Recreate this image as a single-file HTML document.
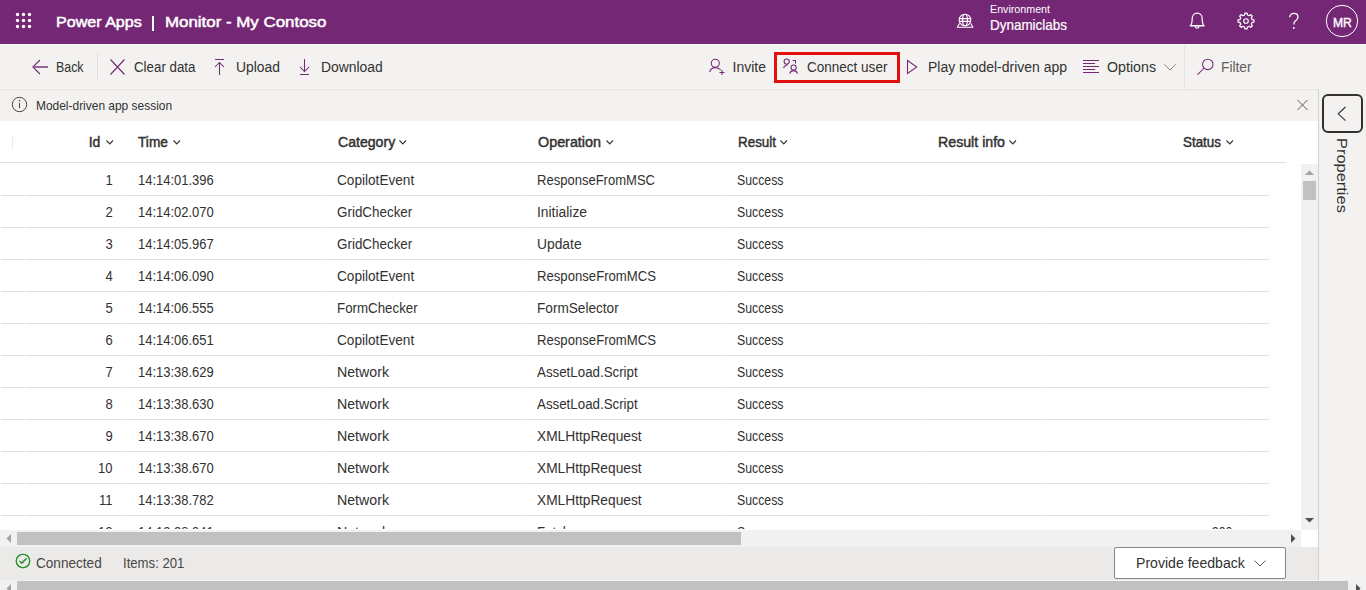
<!DOCTYPE html>
<html><head><meta charset="utf-8">
<style>
*{box-sizing:border-box;margin:0;padding:0}
html,body{width:1366px;height:590px;overflow:hidden;background:#fff;font-family:"Liberation Sans",sans-serif;color:#323130;position:relative}
.a{position:absolute;white-space:nowrap}
.r{position:absolute}
svg{position:absolute;overflow:visible}
</style></head><body>

<div class="r" style="left:0;top:0;width:1366px;height:44px;background:#742774"></div>
<div class="r" style="left:0;top:44px;width:1366px;height:1px;background:#f8f7f7"></div>
<svg style="left:16px;top:13px" width="15" height="15" viewBox="0 0 15 15"><g fill="#fff"><circle cx="1.5" cy="1.5" r="1.65"/><circle cx="7.5" cy="1.5" r="1.65"/><circle cx="13.5" cy="1.5" r="1.65"/><circle cx="1.5" cy="7.5" r="1.65"/><circle cx="7.5" cy="7.5" r="1.65"/><circle cx="13.5" cy="7.5" r="1.65"/><circle cx="1.5" cy="13.5" r="1.65"/><circle cx="7.5" cy="13.5" r="1.65"/><circle cx="13.5" cy="13.5" r="1.65"/></g></svg>
<div class="a" style="left:56.20px;top:14.20px;font-size:15px;line-height:15px;-webkit-text-stroke:0.5px #fff;color:#fff;transform:scaleX(1.0717);transform-origin:0 0;">Power Apps</div>
<div class="r" style="left:152.3px;top:16px;width:1.8px;height:15px;background:#fff"></div>
<div class="a" style="left:164.60px;top:14.20px;font-size:15px;line-height:15px;-webkit-text-stroke:0.5px #fff;color:#fff;transform:scaleX(1.1255);transform-origin:0 0;">Monitor - My Contoso</div>
<div class="a" style="left:990.00px;top:3.62px;font-size:10.5px;line-height:10.5px;color:#fff;transform:scaleX(1.0177);transform-origin:0 0;">Environment</div>
<div class="a" style="left:990.00px;top:16.90px;font-size:15px;line-height:15px;-webkit-text-stroke:0.2px #fff;color:#fff;transform:scaleX(0.8967);transform-origin:0 0;">Dynamiclabs</div>
<div class="r" style="left:0;top:45px;width:1366px;height:44px;background:#f3f2f1"></div>
<div class="r" style="left:0;top:89px;width:1318px;height:1px;background:#e9e8e7"></div>
<div class="r" style="left:0;top:90px;width:1318px;height:1px;background:#efeeed"></div>
<div class="r" style="left:0;top:91px;width:1318px;height:30px;background:#f3f2f1"></div>
<div class="a" style="left:56.40px;top:59.76px;font-size:14px;line-height:14px;transform:scaleX(0.8860);transform-origin:0 0;">Back</div>
<div class="r" style="left:97px;top:53px;width:1px;height:28px;background:#e1dfdd"></div>
<div class="a" style="left:133.80px;top:59.76px;font-size:14px;line-height:14px;transform:scaleX(0.9519);transform-origin:0 0;">Clear data</div>
<div class="a" style="left:236.30px;top:59.76px;font-size:14px;line-height:14px;transform:scaleX(0.9892);transform-origin:0 0;">Upload</div>
<div class="a" style="left:321.20px;top:59.76px;font-size:14px;line-height:14px;transform:scaleX(0.9925);transform-origin:0 0;">Download</div>
<div class="a" style="left:732.50px;top:59.76px;font-size:14px;line-height:14px;">Invite</div>
<div class="r" style="left:774px;top:52px;width:126px;height:31px;border:3px solid #e31010"></div>
<div class="a" style="left:806.60px;top:59.76px;font-size:14px;line-height:14px;transform:scaleX(0.9656);transform-origin:0 0;">Connect user</div>
<div class="a" style="left:928.00px;top:59.76px;font-size:14px;line-height:14px;transform:scaleX(0.9978);transform-origin:0 0;">Play model-driven app</div>
<div class="a" style="left:1107.00px;top:59.76px;font-size:14px;line-height:14px;transform:scaleX(1.0152);transform-origin:0 0;">Options</div>
<div class="r" style="left:1184px;top:45px;width:1px;height:44px;background:#e8e6e4"></div>
<div class="a" style="left:1221.00px;top:59.76px;font-size:14px;line-height:14px;color:#605e5c;transform:scaleX(0.9802);transform-origin:0 0;">Filter</div>
<div class="a" style="left:36.30px;top:98.87px;font-size:13.3px;line-height:13.3px;transform:scaleX(0.8980);transform-origin:0 0;">Model-driven app session</div>
<div class="r" style="left:1319px;top:89px;width:47px;height:491px;background:#f3f2f1"></div>
<div class="r" style="left:1318px;top:89px;width:1px;height:491px;background:#d2d0ce"></div>
<div class="r" style="left:1322px;top:94px;width:41px;height:39px;border:2px solid #323130;border-radius:6px"></div>
<div class="a" style="left:88.70px;top:134.76px;font-size:14px;line-height:14px;-webkit-text-stroke:0.45px #323130;">Id</div>
<svg style="left:106px;top:140px" width="8" height="5" viewBox="0 0 8 5"><path d="M0.5 0.5 L3.75 3.9 L7 0.5" fill="none" stroke="#323130" stroke-width="1.1"/></svg>
<div class="a" style="left:137.70px;top:134.76px;font-size:14px;line-height:14px;-webkit-text-stroke:0.45px #323130;transform:scaleX(0.9774);transform-origin:0 0;">Time</div>
<svg style="left:173.3px;top:140px" width="8" height="5" viewBox="0 0 8 5"><path d="M0.5 0.5 L3.75 3.9 L7 0.5" fill="none" stroke="#323130" stroke-width="1.1"/></svg>
<div class="a" style="left:337.60px;top:134.76px;font-size:14px;line-height:14px;-webkit-text-stroke:0.45px #323130;transform:scaleX(1.0070);transform-origin:0 0;">Category</div>
<svg style="left:399.3px;top:140px" width="8" height="5" viewBox="0 0 8 5"><path d="M0.5 0.5 L3.75 3.9 L7 0.5" fill="none" stroke="#323130" stroke-width="1.1"/></svg>
<div class="a" style="left:537.70px;top:134.76px;font-size:14px;line-height:14px;-webkit-text-stroke:0.45px #323130;transform:scaleX(1.0245);transform-origin:0 0;">Operation</div>
<svg style="left:606.4px;top:140px" width="8" height="5" viewBox="0 0 8 5"><path d="M0.5 0.5 L3.75 3.9 L7 0.5" fill="none" stroke="#323130" stroke-width="1.1"/></svg>
<div class="a" style="left:737.60px;top:134.76px;font-size:14px;line-height:14px;-webkit-text-stroke:0.45px #323130;transform:scaleX(0.9574);transform-origin:0 0;">Result</div>
<svg style="left:780.4px;top:140px" width="8" height="5" viewBox="0 0 8 5"><path d="M0.5 0.5 L3.75 3.9 L7 0.5" fill="none" stroke="#323130" stroke-width="1.1"/></svg>
<div class="a" style="left:937.50px;top:134.76px;font-size:14px;line-height:14px;-webkit-text-stroke:0.45px #323130;transform:scaleX(1.0128);transform-origin:0 0;">Result info</div>
<svg style="left:1008.5px;top:140px" width="8" height="5" viewBox="0 0 8 5"><path d="M0.5 0.5 L3.75 3.9 L7 0.5" fill="none" stroke="#323130" stroke-width="1.1"/></svg>
<div class="a" style="left:1182.60px;top:134.76px;font-size:14px;line-height:14px;-webkit-text-stroke:0.45px #323130;transform:scaleX(0.9574);transform-origin:0 0;">Status</div>
<svg style="left:1225.7px;top:140px" width="8" height="5" viewBox="0 0 8 5"><path d="M0.5 0.5 L3.75 3.9 L7 0.5" fill="none" stroke="#323130" stroke-width="1.1"/></svg>
<div class="r" style="left:12px;top:135px;width:1px;height:14px;background:#edebe9"></div>
<div class="r" style="left:0;top:162px;width:1286px;height:1px;background:#e1dfdd"></div>
<div class="r" style="left:0;top:163px;width:1301px;height:366px;overflow:hidden">
<div class="a" style="left:104.73px;width:7.79px;top:9.76px;font-size:14px;line-height:14px;transform:scaleX(0.9300);transform-origin:100% 0;">1</div>
<div class="a" style="left:137.50px;top:9.76px;font-size:14px;line-height:14px;transform:scaleX(0.9247);transform-origin:0 0;">14:14:01.396</div>
<div class="a" style="left:337.20px;top:9.76px;font-size:14px;line-height:14px;transform:scaleX(0.9725);transform-origin:0 0;">CopilotEvent</div>
<div class="a" style="left:537.20px;top:9.76px;font-size:14px;line-height:14px;transform:scaleX(0.9306);transform-origin:0 0;">ResponseFromMSC</div>
<div class="a" style="left:737.20px;top:9.76px;font-size:14px;line-height:14px;transform:scaleX(0.8787);transform-origin:0 0;">Success</div>
<div class="r" style="left:1px;top:32px;width:1268px;height:1px;background:#e1dfdd"></div>
<div class="r" style="left:24px;top:32px;width:2px;height:1px;background:#f3f2f1"></div>
<div class="r" style="left:124px;top:32px;width:2px;height:1px;background:#f3f2f1"></div>
<div class="r" style="left:324px;top:32px;width:2px;height:1px;background:#f3f2f1"></div>
<div class="r" style="left:524px;top:32px;width:2px;height:1px;background:#f3f2f1"></div>
<div class="r" style="left:724px;top:32px;width:2px;height:1px;background:#f3f2f1"></div>
<div class="r" style="left:924px;top:32px;width:2px;height:1px;background:#f3f2f1"></div>
<div class="r" style="left:1044px;top:32px;width:2px;height:1px;background:#f3f2f1"></div>
<div class="r" style="left:1244px;top:32px;width:2px;height:1px;background:#f3f2f1"></div>
<div class="a" style="left:104.73px;width:7.79px;top:41.76px;font-size:14px;line-height:14px;transform:scaleX(0.9300);transform-origin:100% 0;">2</div>
<div class="a" style="left:137.50px;top:41.76px;font-size:14px;line-height:14px;transform:scaleX(0.9247);transform-origin:0 0;">14:14:02.070</div>
<div class="a" style="left:337.20px;top:41.76px;font-size:14px;line-height:14px;transform:scaleX(0.9583);transform-origin:0 0;">GridChecker</div>
<div class="a" style="left:537.20px;top:41.76px;font-size:14px;line-height:14px;transform:scaleX(0.9886);transform-origin:0 0;">Initialize</div>
<div class="a" style="left:737.20px;top:41.76px;font-size:14px;line-height:14px;transform:scaleX(0.8787);transform-origin:0 0;">Success</div>
<div class="r" style="left:1px;top:64px;width:1268px;height:1px;background:#e1dfdd"></div>
<div class="r" style="left:24px;top:64px;width:2px;height:1px;background:#f3f2f1"></div>
<div class="r" style="left:124px;top:64px;width:2px;height:1px;background:#f3f2f1"></div>
<div class="r" style="left:324px;top:64px;width:2px;height:1px;background:#f3f2f1"></div>
<div class="r" style="left:524px;top:64px;width:2px;height:1px;background:#f3f2f1"></div>
<div class="r" style="left:724px;top:64px;width:2px;height:1px;background:#f3f2f1"></div>
<div class="r" style="left:924px;top:64px;width:2px;height:1px;background:#f3f2f1"></div>
<div class="r" style="left:1044px;top:64px;width:2px;height:1px;background:#f3f2f1"></div>
<div class="r" style="left:1244px;top:64px;width:2px;height:1px;background:#f3f2f1"></div>
<div class="a" style="left:104.73px;width:7.79px;top:73.76px;font-size:14px;line-height:14px;transform:scaleX(0.9300);transform-origin:100% 0;">3</div>
<div class="a" style="left:137.50px;top:73.76px;font-size:14px;line-height:14px;transform:scaleX(0.9247);transform-origin:0 0;">14:14:05.967</div>
<div class="a" style="left:337.20px;top:73.76px;font-size:14px;line-height:14px;transform:scaleX(0.9583);transform-origin:0 0;">GridChecker</div>
<div class="a" style="left:537.20px;top:73.76px;font-size:14px;line-height:14px;transform:scaleX(0.9878);transform-origin:0 0;">Update</div>
<div class="a" style="left:737.20px;top:73.76px;font-size:14px;line-height:14px;transform:scaleX(0.8787);transform-origin:0 0;">Success</div>
<div class="r" style="left:1px;top:96px;width:1268px;height:1px;background:#e1dfdd"></div>
<div class="r" style="left:24px;top:96px;width:2px;height:1px;background:#f3f2f1"></div>
<div class="r" style="left:124px;top:96px;width:2px;height:1px;background:#f3f2f1"></div>
<div class="r" style="left:324px;top:96px;width:2px;height:1px;background:#f3f2f1"></div>
<div class="r" style="left:524px;top:96px;width:2px;height:1px;background:#f3f2f1"></div>
<div class="r" style="left:724px;top:96px;width:2px;height:1px;background:#f3f2f1"></div>
<div class="r" style="left:924px;top:96px;width:2px;height:1px;background:#f3f2f1"></div>
<div class="r" style="left:1044px;top:96px;width:2px;height:1px;background:#f3f2f1"></div>
<div class="r" style="left:1244px;top:96px;width:2px;height:1px;background:#f3f2f1"></div>
<div class="a" style="left:104.73px;width:7.79px;top:105.76px;font-size:14px;line-height:14px;transform:scaleX(0.9300);transform-origin:100% 0;">4</div>
<div class="a" style="left:137.50px;top:105.76px;font-size:14px;line-height:14px;transform:scaleX(0.9247);transform-origin:0 0;">14:14:06.090</div>
<div class="a" style="left:337.20px;top:105.76px;font-size:14px;line-height:14px;transform:scaleX(0.9725);transform-origin:0 0;">CopilotEvent</div>
<div class="a" style="left:537.20px;top:105.76px;font-size:14px;line-height:14px;transform:scaleX(0.9384);transform-origin:0 0;">ResponseFromMCS</div>
<div class="a" style="left:737.20px;top:105.76px;font-size:14px;line-height:14px;transform:scaleX(0.8787);transform-origin:0 0;">Success</div>
<div class="r" style="left:1px;top:128px;width:1268px;height:1px;background:#e1dfdd"></div>
<div class="r" style="left:24px;top:128px;width:2px;height:1px;background:#f3f2f1"></div>
<div class="r" style="left:124px;top:128px;width:2px;height:1px;background:#f3f2f1"></div>
<div class="r" style="left:324px;top:128px;width:2px;height:1px;background:#f3f2f1"></div>
<div class="r" style="left:524px;top:128px;width:2px;height:1px;background:#f3f2f1"></div>
<div class="r" style="left:724px;top:128px;width:2px;height:1px;background:#f3f2f1"></div>
<div class="r" style="left:924px;top:128px;width:2px;height:1px;background:#f3f2f1"></div>
<div class="r" style="left:1044px;top:128px;width:2px;height:1px;background:#f3f2f1"></div>
<div class="r" style="left:1244px;top:128px;width:2px;height:1px;background:#f3f2f1"></div>
<div class="a" style="left:104.73px;width:7.79px;top:137.76px;font-size:14px;line-height:14px;transform:scaleX(0.9300);transform-origin:100% 0;">5</div>
<div class="a" style="left:137.50px;top:137.76px;font-size:14px;line-height:14px;transform:scaleX(0.9247);transform-origin:0 0;">14:14:06.555</div>
<div class="a" style="left:337.20px;top:137.76px;font-size:14px;line-height:14px;transform:scaleX(0.9516);transform-origin:0 0;">FormChecker</div>
<div class="a" style="left:537.20px;top:137.76px;font-size:14px;line-height:14px;transform:scaleX(0.9722);transform-origin:0 0;">FormSelector</div>
<div class="a" style="left:737.20px;top:137.76px;font-size:14px;line-height:14px;transform:scaleX(0.8787);transform-origin:0 0;">Success</div>
<div class="r" style="left:1px;top:160px;width:1268px;height:1px;background:#e1dfdd"></div>
<div class="r" style="left:24px;top:160px;width:2px;height:1px;background:#f3f2f1"></div>
<div class="r" style="left:124px;top:160px;width:2px;height:1px;background:#f3f2f1"></div>
<div class="r" style="left:324px;top:160px;width:2px;height:1px;background:#f3f2f1"></div>
<div class="r" style="left:524px;top:160px;width:2px;height:1px;background:#f3f2f1"></div>
<div class="r" style="left:724px;top:160px;width:2px;height:1px;background:#f3f2f1"></div>
<div class="r" style="left:924px;top:160px;width:2px;height:1px;background:#f3f2f1"></div>
<div class="r" style="left:1044px;top:160px;width:2px;height:1px;background:#f3f2f1"></div>
<div class="r" style="left:1244px;top:160px;width:2px;height:1px;background:#f3f2f1"></div>
<div class="a" style="left:104.73px;width:7.79px;top:169.76px;font-size:14px;line-height:14px;transform:scaleX(0.9300);transform-origin:100% 0;">6</div>
<div class="a" style="left:137.50px;top:169.76px;font-size:14px;line-height:14px;transform:scaleX(0.9247);transform-origin:0 0;">14:14:06.651</div>
<div class="a" style="left:337.20px;top:169.76px;font-size:14px;line-height:14px;transform:scaleX(0.9725);transform-origin:0 0;">CopilotEvent</div>
<div class="a" style="left:537.20px;top:169.76px;font-size:14px;line-height:14px;transform:scaleX(0.9384);transform-origin:0 0;">ResponseFromMCS</div>
<div class="a" style="left:737.20px;top:169.76px;font-size:14px;line-height:14px;transform:scaleX(0.8787);transform-origin:0 0;">Success</div>
<div class="r" style="left:1px;top:192px;width:1268px;height:1px;background:#e1dfdd"></div>
<div class="r" style="left:24px;top:192px;width:2px;height:1px;background:#f3f2f1"></div>
<div class="r" style="left:124px;top:192px;width:2px;height:1px;background:#f3f2f1"></div>
<div class="r" style="left:324px;top:192px;width:2px;height:1px;background:#f3f2f1"></div>
<div class="r" style="left:524px;top:192px;width:2px;height:1px;background:#f3f2f1"></div>
<div class="r" style="left:724px;top:192px;width:2px;height:1px;background:#f3f2f1"></div>
<div class="r" style="left:924px;top:192px;width:2px;height:1px;background:#f3f2f1"></div>
<div class="r" style="left:1044px;top:192px;width:2px;height:1px;background:#f3f2f1"></div>
<div class="r" style="left:1244px;top:192px;width:2px;height:1px;background:#f3f2f1"></div>
<div class="a" style="left:104.73px;width:7.79px;top:201.76px;font-size:14px;line-height:14px;transform:scaleX(0.9300);transform-origin:100% 0;">7</div>
<div class="a" style="left:137.50px;top:201.76px;font-size:14px;line-height:14px;transform:scaleX(0.9247);transform-origin:0 0;">14:13:38.629</div>
<div class="a" style="left:337.20px;top:201.76px;font-size:14px;line-height:14px;transform:scaleX(1.0121);transform-origin:0 0;">Network</div>
<div class="a" style="left:537.20px;top:201.76px;font-size:14px;line-height:14px;transform:scaleX(0.9514);transform-origin:0 0;">AssetLoad.Script</div>
<div class="a" style="left:737.20px;top:201.76px;font-size:14px;line-height:14px;transform:scaleX(0.8787);transform-origin:0 0;">Success</div>
<div class="r" style="left:1px;top:224px;width:1268px;height:1px;background:#e1dfdd"></div>
<div class="r" style="left:24px;top:224px;width:2px;height:1px;background:#f3f2f1"></div>
<div class="r" style="left:124px;top:224px;width:2px;height:1px;background:#f3f2f1"></div>
<div class="r" style="left:324px;top:224px;width:2px;height:1px;background:#f3f2f1"></div>
<div class="r" style="left:524px;top:224px;width:2px;height:1px;background:#f3f2f1"></div>
<div class="r" style="left:724px;top:224px;width:2px;height:1px;background:#f3f2f1"></div>
<div class="r" style="left:924px;top:224px;width:2px;height:1px;background:#f3f2f1"></div>
<div class="r" style="left:1044px;top:224px;width:2px;height:1px;background:#f3f2f1"></div>
<div class="r" style="left:1244px;top:224px;width:2px;height:1px;background:#f3f2f1"></div>
<div class="a" style="left:104.73px;width:7.79px;top:233.76px;font-size:14px;line-height:14px;transform:scaleX(0.9300);transform-origin:100% 0;">8</div>
<div class="a" style="left:137.50px;top:233.76px;font-size:14px;line-height:14px;transform:scaleX(0.9247);transform-origin:0 0;">14:13:38.630</div>
<div class="a" style="left:337.20px;top:233.76px;font-size:14px;line-height:14px;transform:scaleX(1.0121);transform-origin:0 0;">Network</div>
<div class="a" style="left:537.20px;top:233.76px;font-size:14px;line-height:14px;transform:scaleX(0.9514);transform-origin:0 0;">AssetLoad.Script</div>
<div class="a" style="left:737.20px;top:233.76px;font-size:14px;line-height:14px;transform:scaleX(0.8787);transform-origin:0 0;">Success</div>
<div class="r" style="left:1px;top:256px;width:1268px;height:1px;background:#e1dfdd"></div>
<div class="r" style="left:24px;top:256px;width:2px;height:1px;background:#f3f2f1"></div>
<div class="r" style="left:124px;top:256px;width:2px;height:1px;background:#f3f2f1"></div>
<div class="r" style="left:324px;top:256px;width:2px;height:1px;background:#f3f2f1"></div>
<div class="r" style="left:524px;top:256px;width:2px;height:1px;background:#f3f2f1"></div>
<div class="r" style="left:724px;top:256px;width:2px;height:1px;background:#f3f2f1"></div>
<div class="r" style="left:924px;top:256px;width:2px;height:1px;background:#f3f2f1"></div>
<div class="r" style="left:1044px;top:256px;width:2px;height:1px;background:#f3f2f1"></div>
<div class="r" style="left:1244px;top:256px;width:2px;height:1px;background:#f3f2f1"></div>
<div class="a" style="left:104.73px;width:7.79px;top:265.76px;font-size:14px;line-height:14px;transform:scaleX(0.9300);transform-origin:100% 0;">9</div>
<div class="a" style="left:137.50px;top:265.76px;font-size:14px;line-height:14px;transform:scaleX(0.9247);transform-origin:0 0;">14:13:38.670</div>
<div class="a" style="left:337.20px;top:265.76px;font-size:14px;line-height:14px;transform:scaleX(1.0121);transform-origin:0 0;">Network</div>
<div class="a" style="left:537.20px;top:265.76px;font-size:14px;line-height:14px;transform:scaleX(0.9811);transform-origin:0 0;">XMLHttpRequest</div>
<div class="a" style="left:737.20px;top:265.76px;font-size:14px;line-height:14px;transform:scaleX(0.8787);transform-origin:0 0;">Success</div>
<div class="r" style="left:1px;top:288px;width:1268px;height:1px;background:#e1dfdd"></div>
<div class="r" style="left:24px;top:288px;width:2px;height:1px;background:#f3f2f1"></div>
<div class="r" style="left:124px;top:288px;width:2px;height:1px;background:#f3f2f1"></div>
<div class="r" style="left:324px;top:288px;width:2px;height:1px;background:#f3f2f1"></div>
<div class="r" style="left:524px;top:288px;width:2px;height:1px;background:#f3f2f1"></div>
<div class="r" style="left:724px;top:288px;width:2px;height:1px;background:#f3f2f1"></div>
<div class="r" style="left:924px;top:288px;width:2px;height:1px;background:#f3f2f1"></div>
<div class="r" style="left:1044px;top:288px;width:2px;height:1px;background:#f3f2f1"></div>
<div class="r" style="left:1244px;top:288px;width:2px;height:1px;background:#f3f2f1"></div>
<div class="a" style="left:96.93px;width:15.57px;top:297.76px;font-size:14px;line-height:14px;transform:scaleX(0.9300);transform-origin:100% 0;">10</div>
<div class="a" style="left:137.50px;top:297.76px;font-size:14px;line-height:14px;transform:scaleX(0.9247);transform-origin:0 0;">14:13:38.670</div>
<div class="a" style="left:337.20px;top:297.76px;font-size:14px;line-height:14px;transform:scaleX(1.0121);transform-origin:0 0;">Network</div>
<div class="a" style="left:537.20px;top:297.76px;font-size:14px;line-height:14px;transform:scaleX(0.9811);transform-origin:0 0;">XMLHttpRequest</div>
<div class="a" style="left:737.20px;top:297.76px;font-size:14px;line-height:14px;transform:scaleX(0.8787);transform-origin:0 0;">Success</div>
<div class="r" style="left:1px;top:320px;width:1268px;height:1px;background:#e1dfdd"></div>
<div class="r" style="left:24px;top:320px;width:2px;height:1px;background:#f3f2f1"></div>
<div class="r" style="left:124px;top:320px;width:2px;height:1px;background:#f3f2f1"></div>
<div class="r" style="left:324px;top:320px;width:2px;height:1px;background:#f3f2f1"></div>
<div class="r" style="left:524px;top:320px;width:2px;height:1px;background:#f3f2f1"></div>
<div class="r" style="left:724px;top:320px;width:2px;height:1px;background:#f3f2f1"></div>
<div class="r" style="left:924px;top:320px;width:2px;height:1px;background:#f3f2f1"></div>
<div class="r" style="left:1044px;top:320px;width:2px;height:1px;background:#f3f2f1"></div>
<div class="r" style="left:1244px;top:320px;width:2px;height:1px;background:#f3f2f1"></div>
<div class="a" style="left:97.97px;width:14.53px;top:329.76px;font-size:14px;line-height:14px;transform:scaleX(0.9300);transform-origin:100% 0;">11</div>
<div class="a" style="left:137.50px;top:329.76px;font-size:14px;line-height:14px;transform:scaleX(0.9247);transform-origin:0 0;">14:13:38.782</div>
<div class="a" style="left:337.20px;top:329.76px;font-size:14px;line-height:14px;transform:scaleX(1.0121);transform-origin:0 0;">Network</div>
<div class="a" style="left:537.20px;top:329.76px;font-size:14px;line-height:14px;transform:scaleX(0.9811);transform-origin:0 0;">XMLHttpRequest</div>
<div class="a" style="left:737.20px;top:329.76px;font-size:14px;line-height:14px;transform:scaleX(0.8787);transform-origin:0 0;">Success</div>
<div class="r" style="left:1px;top:352px;width:1268px;height:1px;background:#e1dfdd"></div>
<div class="r" style="left:24px;top:352px;width:2px;height:1px;background:#f3f2f1"></div>
<div class="r" style="left:124px;top:352px;width:2px;height:1px;background:#f3f2f1"></div>
<div class="r" style="left:324px;top:352px;width:2px;height:1px;background:#f3f2f1"></div>
<div class="r" style="left:524px;top:352px;width:2px;height:1px;background:#f3f2f1"></div>
<div class="r" style="left:724px;top:352px;width:2px;height:1px;background:#f3f2f1"></div>
<div class="r" style="left:924px;top:352px;width:2px;height:1px;background:#f3f2f1"></div>
<div class="r" style="left:1044px;top:352px;width:2px;height:1px;background:#f3f2f1"></div>
<div class="r" style="left:1244px;top:352px;width:2px;height:1px;background:#f3f2f1"></div>
<div class="a" style="left:96.93px;width:15.57px;top:361.76px;font-size:14px;line-height:14px;transform:scaleX(0.9300);transform-origin:100% 0;">12</div>
<div class="a" style="left:137.50px;top:361.76px;font-size:14px;line-height:14px;transform:scaleX(0.9247);transform-origin:0 0;">14:13:38.941</div>
<div class="a" style="left:337.20px;top:361.76px;font-size:14px;line-height:14px;transform:scaleX(1.0121);transform-origin:0 0;">Network</div>
<div class="a" style="left:537.20px;top:361.76px;font-size:14px;line-height:14px;transform:scaleX(0.9429);transform-origin:0 0;">Fetch</div>
<div class="a" style="left:737.20px;top:361.76px;font-size:14px;line-height:14px;transform:scaleX(0.8787);transform-origin:0 0;">Success</div>
<div class="a" style="left:1208.65px;width:23.36px;top:361.76px;font-size:14px;line-height:14px;transform:scaleX(0.8781);transform-origin:100% 0;">200</div>
</div>
<div class="r" style="left:1301px;top:164px;width:17px;height:366px;background:#f1f1f1"></div>
<svg style="left:1305px;top:170px" width="9" height="5" viewBox="0 0 9 5"><path d="M0 5 L4.5 0.5 L9 5 Z" fill="#a3a3a3"/></svg>
<div class="r" style="left:1303px;top:181px;width:13px;height:19px;background:#c1c1c1"></div>
<svg style="left:1305px;top:518px" width="9" height="5" viewBox="0 0 9 5"><path d="M0 0 L9 0 L4.5 4.5 Z" fill="#505050"/></svg>
<div class="r" style="left:0;top:530px;width:1301px;height:17px;background:#f1f1f1"></div>
<div class="r" style="left:1301px;top:530px;width:17px;height:17px;background:#fff"></div>
<svg style="left:6px;top:534px" width="5" height="9" viewBox="0 0 5 9"><path d="M5 0 L0.5 4.5 L5 9 Z" fill="#a3a3a3"/></svg>
<div class="r" style="left:17px;top:532px;width:724px;height:13px;background:#c1c1c1"></div>
<svg style="left:1291px;top:534px" width="5" height="9" viewBox="0 0 5 9"><path d="M0 0 L4.5 4.5 L0 9 Z" fill="#505050"/></svg>
<div class="r" style="left:0;top:547px;width:1318px;height:33px;background:#ebeae9"></div>
<svg style="left:15px;top:553px" width="16" height="16" viewBox="0 0 16 16"><circle cx="8" cy="8" r="6.8" fill="none" stroke="#2e9a2e" stroke-width="1.1"/><path d="M4.6 8.2 L7 10.4 L11.4 5.6" fill="none" stroke="#2e9a2e" stroke-width="1.1"/></svg>
<div class="a" style="left:36.30px;top:556.06px;font-size:14px;line-height:14px;color:#484644;transform:scaleX(0.9701);transform-origin:0 0;">Connected</div>
<div class="a" style="left:123.40px;top:556.06px;font-size:14px;line-height:14px;color:#484644;transform:scaleX(0.9391);transform-origin:0 0;">Items: 201</div>
<div class="r" style="left:1114px;top:547px;width:172px;height:32px;background:#fff;border:1px solid #8a8886;border-radius:2px"></div>
<div class="a" style="left:1135.60px;top:556.06px;font-size:14px;line-height:14px;transform:scaleX(1.0063);transform-origin:0 0;">Provide feedback</div>
<svg style="left:1254px;top:560px" width="12" height="7" viewBox="0 0 12 7"><path d="M0.5 0.5 L6 6 L11.5 0.5" fill="none" stroke="#605e5c" stroke-width="1"/></svg>
<div class="r" style="left:0;top:580px;width:1366px;height:10px;background:#f1f1f1"></div>
<div class="r" style="left:17px;top:581px;width:1331px;height:9px;background:#c1c1c1"></div>
<svg style="left:6px;top:584px" width="5" height="9" viewBox="0 0 5 9"><path d="M5 0 L0.5 4.5 L5 9 Z" fill="#a3a3a3"/></svg>
<svg style="left:1356px;top:584px" width="5" height="9" viewBox="0 0 5 9"><path d="M0 0 L4.5 4.5 L0 9 Z" fill="#505050"/></svg>
<svg style="left:0;top:0" width="1366" height="590" viewBox="0 0 1366 590">
<g fill="none" stroke="#742774" stroke-width="1.05">
<path d="M40 60 L32.8 67 L40 74"/>
<path d="M33 67 H48" stroke-width="1.9" stroke="#8f608f"/>
<path d="M110.5 59.5 L124.5 74.5 M124.5 59.5 L110.5 74.5" stroke-width="1.1"/>
<path d="M215 59.5 H224"/>
<path d="M219.5 62.5 V75 M215 67 L219.5 62.5 L224 67"/>
<path d="M304.5 59 V71.5 M300 67 L304.5 71.5 L309 67"/>
<path d="M300 74.5 H309"/>
<circle cx="715.3" cy="63.2" r="4"/>
<path d="M709.6 72 C710.5 68.8 713 67.6 715.3 67.6 C717.5 67.6 719.5 68.5 720.8 70"/>
<path d="M719.5 72.5 H724.5 M722 70 V75"/>
<circle cx="786.7" cy="61.6" r="2.6"/>
<path d="M783.6 68.2 C784.2 65.7 785.6 64.9 787.6 64.9"/>
<path d="M792.6 60.5 H795.5 V63.5"/>
<circle cx="793.6" cy="67.6" r="2.6"/>
<path d="M789.7 73.6 C790.3 71.4 791.8 70.6 793.6 70.6 C795.4 70.6 796.9 71.4 797.5 73.6"/>
<path d="M907.5 60.5 L916.8 67 L907.5 73.5 Z"/>
<path d="M1083 60.5 H1099 M1083 63.5 H1095 M1083 66.5 H1099 M1083 69.5 H1095 M1083 72.5 H1099"/>
<circle cx="1207.8" cy="64.4" r="5.2"/>
<path d="M1197.5 74.6 L1204.2 68"/>
</g>
<path d="M1164.3 64.3 L1170 70 L1175.7 64.3" fill="none" stroke="#8a8886" stroke-width="1"/>
<g fill="none" stroke="#484644" stroke-width="1">
<circle cx="19.5" cy="104.5" r="7.2"/>
<path d="M19.5 102.8 V108.2"/>
</g>
<circle cx="19.5" cy="100.8" r="0.7" fill="#323130"/>
<path d="M1297.5 100 L1307.5 110 M1307.5 100 L1297.5 110" fill="none" stroke="#605e5c" stroke-width="1"/>
<path d="M1345.5 107 L1338.2 113.8 L1345.5 120.6" fill="none" stroke="#323130" stroke-width="1.1"/>
<g fill="none" stroke="#fff" stroke-width="1.1">
<circle cx="965" cy="20" r="5.8"/>
<ellipse cx="965" cy="20" rx="2.4" ry="5.8"/>
<path d="M959.5 18.6 H970.5 M959.5 21.4 H970.5"/>
<path d="M959.5 23.3 L957.5 27.3 H972.8 L970.7 23.3"/>
<path d="M1190.6 25.6 C1192.1 23.8 1192.2 21.5 1192.2 18.6 C1192.2 15.3 1194.4 13.2 1197.2 13.2 C1200 13.2 1202.2 15.3 1202.2 18.6 C1202.2 21.5 1202.3 23.8 1203.8 25.6 Z" stroke-width="1.2" stroke-linejoin="round"/>
<path d="M1189.8 25.8 H1204.6" stroke-width="1.2"/>
<path d="M1195.3 26.2 A1.9 1.9 0 0 0 1199.1 26.2"/>
<circle cx="1246" cy="21" r="2.3"/>
<circle cx="1342" cy="21" r="15.7" stroke-width="1"/>
<path d="M1289.8 17.3 C1289.8 14.8 1291.6 13.3 1293.8 13.3 C1296.2 13.3 1298 14.9 1298 17.1 C1298 19.2 1296.6 20.1 1295.3 21 C1294.1 21.8 1293.8 22.6 1293.8 24.6" stroke-width="1.3"/>
</g>
<circle cx="1293.8" cy="28" r="0.95" fill="#fff"/>
<g fill="none" stroke="#2a8f2a" stroke-width="1.1">
<circle cx="23" cy="561" r="6.7"/>
<path d="M19.4 561.2 L21.5 563 L26.6 558.2"/>
</g>
<path d="M1252.03 19.55 L1253.93 19.94 L1253.93 22.06 L1252.03 22.45 L1251.29 24.24 L1252.36 25.85 L1250.85 27.36 L1249.24 26.29 L1247.45 27.03 L1247.06 28.93 L1244.94 28.93 L1244.55 27.03 L1242.76 26.29 L1241.15 27.36 L1239.64 25.85 L1240.71 24.24 L1239.97 22.45 L1238.07 22.06 L1238.07 19.94 L1239.97 19.55 L1240.71 17.76 L1239.64 16.15 L1241.15 14.64 L1242.76 15.71 L1244.55 14.97 L1244.94 13.07 L1247.06 13.07 L1247.45 14.97 L1249.24 15.71 L1250.85 14.64 L1252.36 16.15 L1251.29 17.76 Z" fill="none" stroke="#fff" stroke-width="1.25" stroke-linejoin="round"/>
</svg>
<div class="a" style="left:1333.00px;top:15.82px;font-size:13px;line-height:13px;-webkit-text-stroke:0.4px #fff;color:#fff;transform:scaleX(0.9349);transform-origin:0 0;">MR</div>
<div class="a" style="left:1350.3px;top:138.2px;font-size:15px;line-height:15px;transform-origin:0 0;transform:rotate(90deg) scaleX(1.095)">Properties</div>
</body></html>
